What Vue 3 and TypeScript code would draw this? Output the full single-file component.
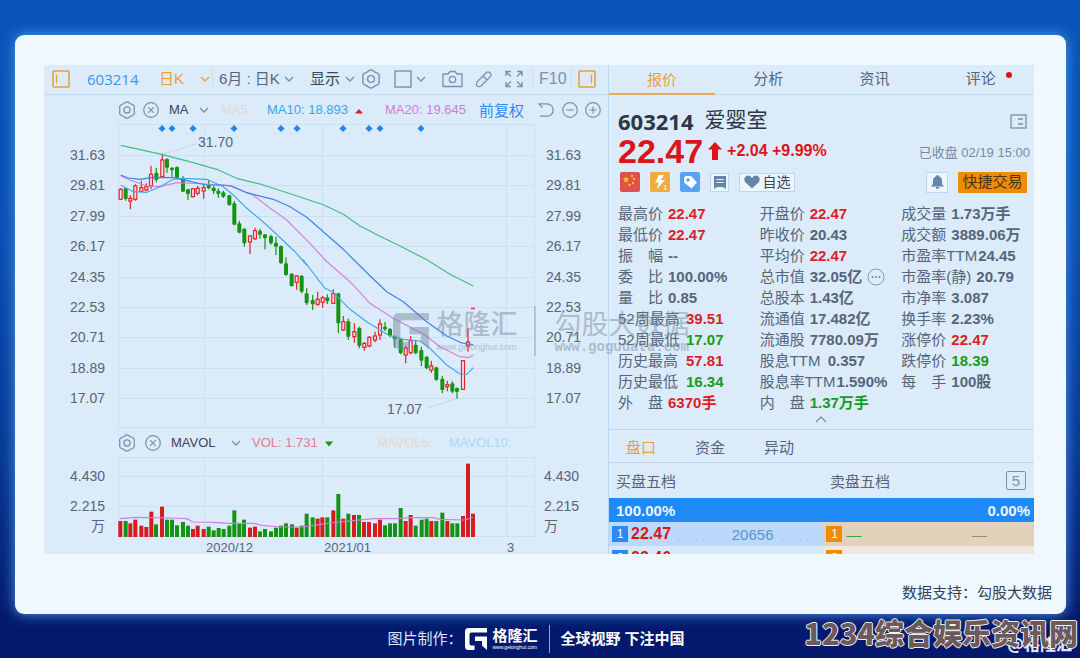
<script setup lang="ts">
type Tone = 'up' | 'down' | ''
type Candle = [x: number, bodyTop: number, bodyBottom: number, high: number, low: number, up: number]
type Point = [number, number]
interface Stat { label: string; value: string; tone?: Tone; fit?: 'wide' | 'tight'; more?: boolean }

/* Series are stored at three units per chart pixel. */
const UNIT = 3
const PLOT_BOTTOM = 81

const early: Candle[] = [
  [32, 208, 238, 205, 240, 1], [47, 205, 237, 203, 242, 0], [61, 235, 243, 225, 268, 1],
  [76, 198, 238, 193, 242, 1], [94, 203, 214, 182, 216, 1], [109, 200, 210, 190, 212, 1],
  [123, 163, 198, 137, 207, 1], [139, 158, 180, 143, 187, 0], [157, 120, 170, 101, 172, 1],
  [171, 117, 143, 115, 158, 0], [186, 143, 151, 141, 170, 0], [201, 141, 173, 139, 175, 0],
  [219, 175, 215, 168, 216, 0], [234, 208, 222, 206, 240, 0], [249, 206, 230, 204, 232, 1],
  [263, 205, 220, 198, 226, 1], [281, 203, 213, 193, 236, 1], [296, 195, 205, 180, 208, 0],
  [311, 203, 214, 198, 222, 0], [325, 212, 222, 205, 233, 0], [340, 217, 230, 212, 234, 0],
  [358, 226, 255, 224, 257, 0], [373, 250, 314, 243, 316, 0], [388, 310, 338, 302, 340, 0],
  [403, 326, 370, 324, 380, 0], [420, 348, 366, 346, 402, 1], [435, 332, 356, 323, 360, 1],
  [450, 332, 344, 326, 356, 0], [465, 343, 355, 342, 388, 0], [483, 348, 370, 344, 374, 0],
  [498, 368, 380, 350, 405, 0], [513, 378, 430, 376, 432, 0], [528, 430, 465, 412, 467, 0],
  [545, 461, 498, 459, 500, 0], [560, 468, 487, 466, 509, 1],
]
const late: Candle[] = [
  [5, 47, 95, 45, 100, 0], [20, 100, 130, 85, 135, 0], [38, 120, 133, 105, 150, 0],
  [53, 118, 133, 95, 137, 1], [68, 113, 127, 108, 143, 1], [82, 112, 124, 103, 132, 0],
  [100, 101, 130, 88, 132, 1], [115, 100, 190, 98, 220, 0], [130, 185, 210, 168, 213, 1],
  [145, 184, 230, 176, 240, 0], [163, 215, 230, 190, 248, 1], [178, 203, 258, 200, 265, 0],
  [193, 250, 262, 247, 272, 1], [208, 232, 258, 228, 262, 1], [225, 228, 240, 215, 247, 1],
  [240, 192, 225, 178, 240, 1], [255, 200, 208, 186, 213, 0], [270, 206, 228, 204, 232, 0],
  [284, 228, 238, 226, 264, 0], [302, 238, 280, 236, 283, 0], [317, 264, 285, 258, 310, 1],
  [332, 242, 278, 228, 283, 1], [347, 254, 280, 240, 283, 0], [364, 270, 302, 260, 318, 0],
  [380, 290, 325, 288, 328, 0], [394, 318, 330, 302, 338, 1], [409, 322, 360, 320, 362, 0],
  [427, 356, 390, 347, 400, 0], [442, 374, 380, 362, 394, 1], [457, 370, 395, 364, 400, 0],
  [471, 384, 396, 382, 416, 0], [489, 302, 388, 300, 390, 1], [504, 246, 258, 205, 275, 1],
]
const earlyX = (x: number): number => (x + 198) / UNIT
const earlyY = (y: number): number => (y - 12) / UNIT
const lateX = (x: number): number => (x + 768) / UNIT
const lateY = (y: number): number => (y + 408) / UNIT
const candles = [
  ...early.map(([x, t, b, h, l, up]) => ({ x: earlyX(x), t: earlyY(t), b: earlyY(b), h: earlyY(h), l: earlyY(l), up: up === 1 })),
  ...late.map(([x, t, b, h, l, up]) => ({ x: lateX(x), t: lateY(t), b: lateY(b), h: lateY(h), l: lateY(l), up: up === 1 })),
]
const joinPoints = (a: Point[], b: Point[]): string => [
  ...a.map(([x, y]) => `${earlyX(x).toFixed(1)},${earlyY(y).toFixed(1)}`),
  ...b.map(([x, y]) => `${lateX(x).toFixed(1)},${lateY(y).toFixed(1)}`),
].join(' ')

const averages = [
  { color: '#3fbf83', points: joinPoints(
    [[32, 76], [155, 103], [250, 128], [320, 148], [380, 175], [450, 192], [550, 224], [640, 254], [700, 283], [750, 318], [810, 349], [870, 378]],
    [[382, 0], [450, 43], [520, 78]]) },
  { color: '#d184dd', points: joinPoints(
    [[32, 168], [60, 180], [110, 198], [150, 200], [200, 188], [290, 192], [360, 198], [430, 226], [480, 264], [530, 300], [600, 370], [650, 425]],
    [[75, 0], [150, 65], [210, 130], [280, 175], [375, 225], [420, 260], [480, 290], [505, 293], [520, 285]]) },
  { color: '#3fa9ea', points: joinPoints(
    [[32, 196], [70, 215], [110, 217], [150, 200], [190, 178], [220, 175], [290, 178], [340, 200], [370, 225], [405, 260], [470, 315], [520, 362], [555, 395], [590, 435]],
    [[10, 0], [75, 85], [100, 97], [150, 148], [200, 185], [265, 225], [310, 238], [360, 243], [390, 265], [440, 315], [480, 342], [500, 343], [520, 323]]) },
  { color: '#3c82ee', points: joinPoints(
    [[32, 165], [55, 174], [90, 178], [130, 172], [195, 173], [240, 184], [290, 195], [340, 195], [365, 198], [410, 218], [490, 238], [540, 260], [590, 292], [640, 335], [700, 388]],
    [[162, 0], [210, 47], [260, 95], [310, 125], [380, 185], [440, 228], [480, 247], [500, 252], [520, 254]]) },
]

const verticals: number[] = [74, 160, 278, 462, 490]
const priceTicks = ['31.63', '29.81', '27.99', '26.17', '24.35', '22.53', '20.71', '18.89', '17.07']
  .map((text, i) => ({ text, y: Math.round(31 + i * 30.4) }))
const events: number[] = [118, 128, 149, 190, 237, 253, 299, 325, 336, 377]

/* Volume: position and height of every bar; falling days are negative. */
const volumeData: Point[] = [
  [241, 48], [257, -48], [271, 41], [286, 52], [304, 34], [319, 30], [334, 76], [348, -38], [366, 91],
  [381, -52], [396, -52], [411, -35], [429, -45], [444, -34], [459, 24], [473, 34], [491, 24], [506, -31],
  [521, -20], [536, -27], [551, -24], [568, -34], [583, -80], [598, -40], [612, -52], [630, 28], [645, 31],
  [660, -17], [675, -24], [693, -17], [708, -28], [723, -34], [738, -41], [756, -38], [770, 28], [785, -34],
  [800, -70], [818, -59], [833, 55], [847, 59], [862, -59], [880, 80], [895, -129], [910, 55], [925, -70],
  [942, 66], [957, -66], [972, 45], [987, 45], [1005, 41], [1020, 52], [1035, -35], [1050, -41], [1065, -41],
  [1082, -87], [1097, 48], [1112, 66], [1127, -34], [1145, -52], [1160, -55], [1174, 48], [1189, -48],
  [1207, -73], [1222, 48], [1237, -41], [1252, -41], [1269, 63], [1284, 220], [1299, 70],
]
const volumes = volumeData.map(([x, h]) => ({ x: (x - 12) / UNIT, h: Math.abs(h) / UNIT, up: h > 0 }))
const volumeAverage = ([
  [240, 281], [290, 277], [390, 279], [440, 281], [460, 291], [520, 292], [570, 295], [640, 295], [665, 301],
  [720, 306], [790, 306], [840, 298], [895, 291], [940, 287], [1000, 281], [1070, 281], [1110, 278],
  [1180, 278], [1200, 283], [1275, 285], [1299, 277],
] as Point[]).map(([x, y]) => `${((x - 12) / UNIT).toFixed(1)},${((y - 93) / UNIT).toFixed(1)}`).join(' ')

const gear = Array.from({ length: 60 }, (_, i) => {
  const a = (i / 60) * Math.PI * 2
  const r = 8.5 - 0.5 * Math.cos(6 * a)
  return `${(10 + r * Math.cos(a)).toFixed(2)},${(10 + r * Math.sin(a)).toFixed(2)}`
}).join(' ')

const tabs = [
  { name: '报价', active: true, dot: false }, { name: '分析', active: false, dot: false },
  { name: '资讯', active: false, dot: false }, { name: '评论', active: false, dot: true },
]
const statColumns: Stat[][] = [
  [
    { label: '最高价', value: '22.47', tone: 'up' }, { label: '最低价', value: '22.47', tone: 'up' },
    { label: '振　幅', value: '--' }, { label: '委　比', value: '100.00%' }, { label: '量　比', value: '0.85' },
    { label: '52周最高', value: '39.51', tone: 'up', fit: 'wide' }, { label: '52周最低', value: '17.07', tone: 'down', fit: 'wide' },
    { label: '历史最高', value: '57.81', tone: 'up', fit: 'wide' }, { label: '历史最低', value: '16.34', tone: 'down', fit: 'wide' },
    { label: '外　盘', value: '6370手', tone: 'up' },
  ],
  [
    { label: '开盘价', value: '22.47', tone: 'up' }, { label: '昨收价', value: '20.43' },
    { label: '平均价', value: '22.47', tone: 'up' }, { label: '总市值', value: '32.05亿', more: true },
    { label: '总股本', value: '1.43亿' }, { label: '流通值', value: '17.482亿' }, { label: '流通股', value: '7780.09万' },
    { label: '股息TTM', value: '0.357', fit: 'wide' }, { label: '股息率TTM', value: '1.590%', fit: 'tight' },
    { label: '内　盘', value: '1.37万手', tone: 'down' },
  ],
  [
    { label: '成交量', value: '1.73万手' }, { label: '成交额', value: '3889.06万' },
    { label: '市盈率TTM', value: '24.45', fit: 'tight' }, { label: '市盈率(静)', value: '20.79' },
    { label: '市净率', value: '3.087' }, { label: '换手率', value: '2.23%' },
    { label: '涨停价', value: '22.47', tone: 'up' }, { label: '跌停价', value: '18.39', tone: 'down' },
    { label: '每　手', value: '100股' },
  ],
]
</script>

<template>
  <div class="page">
    <svg class="defs" aria-hidden="true">
      <symbol id="i-gear" viewBox="0 0 20 20">
        <polygon :points="gear" fill="none" stroke="currentColor" stroke-width="1.4" stroke-linejoin="round" />
        <circle cx="10" cy="10" r="3.4" fill="none" stroke="currentColor" stroke-width="1.4" />
      </symbol>
      <symbol id="i-chev" viewBox="0 0 10 10">
        <path d="M1 3l4 4 4-4" fill="none" stroke="currentColor" stroke-width="1.4" />
      </symbol>
      <symbol id="i-close" viewBox="0 0 16 16">
        <g fill="none" stroke="currentColor" stroke-width="1.2"><circle cx="8" cy="8" r="7.3" /><path d="M5.2 5.2l5.6 5.6M10.8 5.2l-5.6 5.6" /></g>
      </symbol>
      <symbol id="i-logo" viewBox="0 0 44 44">
        <path d="M7 0h37v9H13q-4 0-4 4v18q0 4 4 4h6v9H7q-7 0-7-7V7q0-7 7-7zM20 17h24v27l-10-9V26H20z" fill="currentColor" />
      </symbol>
    </svg>

    <main class="card">
      <div class="board">
        <section class="left">
          <div class="toolbar">
            <button class="gold" aria-label="左侧栏">
              <svg width="18" height="18" viewBox="0 0 18 18" fill="none" stroke="currentColor"><rect x="1" y="1" width="16" height="16" rx="1" stroke-width="1.6" /><path d="M4.5 4.5v9" stroke-width="1.2" /></svg>
            </button>
            <a class="code" href="#">603214</a>
            <label class="drop gold spaced"><select aria-label="周期"><option>日K</option></select><svg width="10" height="10"><use href="#i-chev" /></svg></label>
            <label class="drop rule"><select aria-label="范围"><option>6月 : 日K</option></select><svg width="10" height="10"><use href="#i-chev" /></svg></label>
            <label class="drop dark"><select aria-label="显示"><option>显示</option></select><svg width="10" height="10"><use href="#i-chev" /></svg></label>
            <button aria-label="设置"><svg width="20" height="20"><use href="#i-gear" /></svg></button>
            <button aria-label="形状">
              <svg width="18" height="18" fill="none" stroke="currentColor" stroke-width="1.4"><rect x="1" y="1" width="16" height="16" /></svg>
              <svg class="next" width="10" height="10"><use href="#i-chev" /></svg>
            </button>
            <button aria-label="截图">
              <svg width="21" height="18" fill="none" stroke="currentColor" stroke-width="1.3"><path d="M1 4h5l2-2.5h5L15 4h5v12.500H1z" stroke-linejoin="round" /><circle cx="10.500" cy="9.500" r="3.200" /></svg>
            </button>
            <button aria-label="画线">
              <svg width="18" height="18" fill="none" stroke="currentColor" stroke-width="1.3" stroke-linejoin="round"><path d="M2 12L11.500 2.500q1.500-1.300 3 0l1 1q1.300 1.500 0 3L6 16q-1.500 1-3 .5Q1.500 16 1.500 14.500 1.400 13 2 12zM8 6l4 4" /></svg>
            </button>
            <button aria-label="全屏">
              <svg width="20" height="18" fill="none" stroke="currentColor" stroke-width="1.4"><path d="M2 6V1.500h5M2 1.500l5 5M13 1.500h5V6M18 1.500l-5 5M2 12v4.500h5M2 16.500l5-5M18 12v4.500h-5M18 16.500l-5-5" /></svg>
            </button>
            <button class="rule f10">F10</button>
            <button class="rule gold" aria-label="右侧栏">
              <svg width="18" height="18" viewBox="0 0 18 18" fill="none" stroke="currentColor"><rect x="1" y="1" width="16" height="16" rx="1" stroke-width="1.6" /><path d="M13.500 4.500v9" stroke-width="1.2" /></svg>
            </button>
          </div>

          <div class="params price">
            <button aria-label="指标设置"><svg width="18" height="18"><use href="#i-gear" /></svg></button>
            <button aria-label="关闭指标"><svg width="16" height="16"><use href="#i-close" /></svg></button>
            <label class="drop wide dark"><select aria-label="主图指标"><option>MA</option></select><svg width="10" height="10"><use href="#i-chev" /></svg></label>
            <span class="faint">MA5:</span>
            <span class="cyan">MA10: 18.893</span>
            <span><svg width="8" height="6"><path d="M0 5.500L4 1l4 4.500z" fill="#d91e1e" /></svg></span>
            <span class="pink">MA20: 19.645</span>
            <button class="adjust">前复权</button>
            <button aria-label="撤销"><svg width="16" height="16" fill="none" stroke="currentColor" stroke-width="1.3"><path d="M4.500 5.500L1 1.800H9a6 6 0 0 1 0 12.400H2" /></svg></button>
            <button aria-label="缩小"><svg width="16" height="16" fill="none" stroke="currentColor" stroke-width="1.2"><circle cx="8" cy="8" r="7.300" /><path d="M4.500 8h7" /></svg></button>
            <button aria-label="放大"><svg width="16" height="16" fill="none" stroke="currentColor" stroke-width="1.2"><circle cx="8" cy="8" r="7.300" /><path d="M4.500 8h7M8 4.500v7" /></svg></button>
          </div>

          <svg class="chart" viewBox="0 0 564 305" role="img" aria-label="K线图">
            <g stroke="#c9e0f5">
              <path v-for="x in verticals" :key="x" :d="`M${x + 0.5} 0V304`" />
              <path d="M74 .5H490M74 303.500H490" />
              <path v-for="t in priceTicks" :key="t.y" :d="`M74 ${t.y + 0.5}H490`" />
            </g>
            <g class="axis">
              <text v-for="t in priceTicks" :key="t.y" x="61" :y="t.y + 5" text-anchor="end">{{ t.text }}</text>
              <text v-for="t in priceTicks" :key="-t.y" x="502" :y="t.y + 5">{{ t.text }}</text>
              <text x="154" y="23">31.70</text>
              <text x="343" y="290">17.07</text>
            </g>
            <path d="M119 30L152 20M383 284L412 275" stroke="#c3d6ea" />
            <path v-for="x in events" :key="x" :d="`M${x - 3.5} 4.500l3.500-3.500 3.500 3.500-3.500 3.500z`" fill="#1f86f0" />
            <g v-for="(c, i) in candles" :key="i">
              <template v-if="c.up">
                <path :d="`M${c.x} ${c.h}V${c.t}M${c.x} ${c.b}V${c.l}`" stroke="#e02428" stroke-width="1.200" />
                <rect :x="c.x - 1.5" :y="c.t" width="3" :height="c.b - c.t" fill="#f4e4ea" stroke="#e02428" stroke-width="1.200" />
              </template>
              <template v-else>
                <path :d="`M${c.x} ${c.h}V${c.l}`" stroke="#159315" stroke-width="1.200" />
                <rect :x="c.x - 2" :y="c.t" width="4" :height="c.b - c.t" rx="1" fill="#159315" />
              </template>
            </g>
            <path d="M427 184.500h4" stroke="#e02428" stroke-width="1.400" />
            <polyline v-for="a in averages" :key="a.color" :points="a.points" fill="none" :stroke="a.color" stroke-width="1.200" stroke-linejoin="round" />
          </svg>

          <div class="params volume">
            <button aria-label="指标设置"><svg width="18" height="18"><use href="#i-gear" /></svg></button>
            <button aria-label="关闭指标"><svg width="16" height="16"><use href="#i-close" /></svg></button>
            <label class="drop wide dark"><select aria-label="副图指标"><option>MAVOL</option></select><svg width="10" height="10"><use href="#i-chev" /></svg></label>
            <span class="rose">VOL: 1.731</span>
            <span><svg width="8" height="6"><path d="M0 .5h8L4 5.500z" fill="#159315" /></svg></span>
            <span class="faint">MAVOL5:</span>
            <span class="pale">MAVOL10:</span>
          </div>

          <svg class="chart" viewBox="0 0 564 98" role="img" aria-label="成交量">
            <g stroke="#c9e0f5">
              <path v-for="x in verticals" :key="x" :d="`M${x + 0.5} 1V81`" />
              <path d="M74 1.500H490M74 20.500H490M74 50.500H490M74 80.500H490" />
            </g>
            <rect v-for="v in volumes" :key="v.x" :x="v.x - 2" :y="PLOT_BOTTOM - v.h" width="4" :height="v.h" :fill="v.up ? '#d51c1f' : '#159315'" />
            <polyline :points="volumeAverage" fill="none" stroke="#cf7fdb" stroke-width="1.200" />
            <g class="axis">
              <g text-anchor="end"><text x="61" y="25">4.430</text><text x="61" y="55">2.215</text><text x="61" y="75">万</text></g>
              <text x="500" y="25">4.430</text><text x="500" y="55">2.215</text><text x="500" y="75">万</text>
              <text class="date" x="162" y="96">2020/12</text><text class="date" x="280" y="96">2021/01</text><text class="date" x="463" y="96">3</text>
            </g>
          </svg>
        </section>

        <section class="right">
          <nav class="tabs">
            <button v-for="t in tabs" :key="t.name" :class="{ active: t.active }">{{ t.name }}<i v-if="t.dot" class="dot"></i></button>
          </nav>

          <div class="quote">
            <div class="name">
              <b>603214</b><span>爱婴室</span>
              <button aria-label="详情"><svg width="17" height="15" fill="none" stroke="currentColor" stroke-width="1.300"><rect x="1" y="1" width="15" height="13" /><path d="M8 5h5M8 10h5" /></svg></button>
            </div>
            <div class="last">
              <strong>22.47</strong>
              <svg width="14" height="18"><path d="M7 0l7 7.500h-4V18H4V7.500H0z" fill="#dc1418" /></svg>
              <b>+2.04 +9.99%</b>
              <time>已收盘 02/19 15:00</time>
            </div>
            <div class="actions">
              <svg width="20" height="20"><rect width="20" height="20" rx="2" fill="#e0504f" /><path d="M6 4l1 2.300 2.400.2-1.900 1.600.6 2.400L6 9.200l-2.100 1.300.6-2.400-1.900-1.600L5 6.300z" fill="#fbc51d" /><g fill="#fbc51d"><circle cx="12" cy="4" r="1.200" /><circle cx="14" cy="7" r="1.200" /><circle cx="13" cy="11" r="1.200" /><circle cx="9.500" cy="13" r="1.200" /></g></svg>
              <svg width="20" height="20"><rect width="20" height="20" rx="2" fill="#edab42" /><path d="M9 3h5l-3 5h4L7 17l1.500-6.500H5z" fill="#fff" /><text x="13" y="18" font-size="8" fill="#fff">1</text></svg>
              <svg width="20" height="20"><rect width="20" height="20" rx="2" fill="#57a1f6" /><path d="M4 5.500L5.500 4H11l6 6.500-5.500 6L4 10.500z" fill="#fff" /><circle cx="8" cy="8" r="1.700" fill="#57a1f6" /></svg>
              <button class="box" aria-label="笔记"><svg width="12" height="13"><path d="M0 0h12v13l-3-2H3l-3 2z" fill="#6685aa" /><path d="M2.500 3.500h7M2.500 6.500h7" stroke="#eef6ff" stroke-width="1.200" /></svg></button>
              <button class="box fav"><svg width="16" height="14"><path d="M8 13.500L1.500 7.500Q-.5 5 .8 2.500 2 .5 4.300.5 6.800.5 8 3 9.200.5 11.700.5 14 .5 15.200 2.500 16.500 5 14.500 7.500z" fill="#6685aa" /></svg>自选</button>
              <button class="box bell" aria-label="提醒"><svg width="13" height="14"><path d="M6.500 0q1 0 1.200 1.200Q11 2.200 11 6v3l2 2.500H0L2 9V6q0-3.800 3.300-4.800Q5.500 0 6.500 0zM4.500 12h4q-.5 2-2 2t-2-2z" fill="#6685aa" /></svg></button>
              <button class="trade">快捷交易</button>
            </div>

            <div class="stats">
              <dl v-for="(col, i) in statColumns" :key="i">
                <div v-for="s in col" :key="s.label" :class="s.fit">
                  <dt>{{ s.label }}</dt>
                  <dd :class="s.tone">{{ s.value }}</dd>
                  <svg v-if="s.more" width="18" height="18"><circle cx="9" cy="9" r="8" fill="none" stroke="#7f98b8" /><g fill="#7088a8"><circle cx="5.500" cy="9" r="1" /><circle cx="9" cy="9" r="1" /><circle cx="12.500" cy="9" r="1" /></g></svg>
                </div>
              </dl>
            </div>
            <button class="fold" aria-label="收起"><svg width="12" height="8" fill="none" stroke="currentColor" stroke-width="1.400"><path d="M1 7l5-5 5 5" /></svg></button>
          </div>

          <nav class="subtabs"><button class="active">盘口</button><button>资金</button><button>异动</button></nav>
          <div class="levels"><span>买盘五档</span><span>卖盘五档</span><button>5</button></div>
          <div class="ratio"><span>100.00%</span><span>0.00%</span></div>
          <div class="depth">
            <div class="bid"><i>1</i><b>22.47</b><span class="dots"></span><em>20656</em><span class="dots tail"></span></div>
            <div class="ask"><i>1</i><b>—</b><em>—</em></div>
          </div>
          <div class="depth cut">
            <div class="bid"><i>2</i><b>22.46</b><em>42</em><span class="tail"></span></div>
            <div class="ask"><i>2</i></div>
          </div>
        </section>

        <div class="mark" aria-hidden="true">
          <svg width="36" height="38"><use href="#i-logo" /></svg>
          <div><p class="brand">格隆汇</p><p class="url">www.gelonghui.com</p></div>
          <div class="gogu"><p>勾股大数据</p><p class="url">www.gogudata.com</p></div>
        </div>
      </div>
      <p class="note">数据支持：勾股大数据</p>
    </main>

    <footer>
      <span class="by">图片制作：</span>
      <svg width="22" height="22"><use href="#i-logo" /></svg>
      <div class="maker"><b>格隆汇</b><small>www.gelonghui.com</small></div>
      <strong>全球视野 下注中国</strong>
    </footer>
    <div class="stamp"><small>@格隆汇</small><span>1234综合娱乐资讯网</span></div>
  </div>
</template>

<style>
body { margin: 0; }
</style>

<style scoped>
* { box-sizing: border-box; }
.page {
  position: relative; display: flex; flex-direction: column; min-height: 100vh; padding-top: 35px; overflow: hidden;
  background: linear-gradient(#0b54b9, #0a4fb4 35%, #073794 70%, #04196d 94%, #04196d);
  font-family: "Liberation Sans", "Noto Sans CJK SC", sans-serif; color: #55657a;
}
.defs { position: absolute; width: 0; height: 0; }
button, select { padding: 0; border: 0; background: none; font: inherit; color: inherit; }
button { display: flex; align-items: center; }
p, dl, dd { margin: 0; }
i, em { font-style: normal; }
svg { flex: none; }
.card { margin: 0 14px 0 15px; padding: 30px 0 10px; border-radius: 9px; background: #eff7ff; box-shadow: 0 0 14px #4d9be4; }
.board { position: relative; display: grid; grid-template-columns: minmax(0, 564fr) minmax(0, 426fr); margin: 0 32px 0 29px; background: #dcebfa; }
.gold { color: #e9a03a; }
.dark { color: #3a4656; }

.toolbar {
  display: grid; height: 30px; padding: 0 0 2px 8px; border-bottom: 1px solid #bcdcf3; font-size: 15px; color: #7a90ad;
  grid-template-columns: 35fr 72fr 53fr 98fr 51fr 33fr 48fr 33fr 29fr 28fr 39fr 37fr;
}
.toolbar > * { min-width: 0; display: flex; align-items: center; white-space: nowrap; }
.toolbar .gold { color: #e9a03a; }
.code { font-family: "Open Sans", sans-serif; color: #3f92f2; text-decoration: none; }
.drop { display: flex; align-items: center; gap: 4px; }
.drop select { appearance: none; }
.drop svg { color: #7a90ad; }
.spaced { gap: 15px; }
.spaced svg { color: #e9a03a; }
.wide { justify-content: space-between; padding-right: 20px; }
.volume .wide { padding-right: 11px; }
.price .wide { padding-right: 12px; }
.rule { position: relative; padding-left: 7px; }
.rule::before { content: ""; position: absolute; left: 0; top: 4px; bottom: 4px; width: 1px; background: #cbdff3; }
.rule select { color: #55657a; }
.toolbar .dark { color: #3a4656; }
.next { margin-left: 4px; }
.f10 { font-size: 16px; }

.params { display: grid; align-items: center; padding-left: 74px; font-size: 13px; color: #7a90ad; white-space: nowrap; }
.params > * { min-width: 0; }
.params .dark { color: #3a4656; }
.price { height: 29px; grid-template-columns: 25fr 26fr 52fr 46fr 88fr 30fr 94fr 59fr 24fr 23fr 23fr; }
.volume { height: 27px; grid-template-columns: 27fr 26fr 81fr 73fr 52fr 72fr 159fr; }
.faint { color: #e3d9cc; }
.cyan { color: #36a9e6; }
.pink { color: #d27bdc; }
.rose { color: #e0808c; }
.pale { color: #a9d9f3; }
.params .adjust { font-size: 15px; color: #2a8af2; }
.chart { display: block; width: 100%; height: auto; }
.axis { font-size: 14px; fill: #55657a; }
.date { font-size: 13px; }

.right { border-left: 1px solid #b5d9f4; }
.tabs { display: grid; grid-template-columns: repeat(4, 1fr); height: 30px; border-bottom: 1px solid #bcdcf3; font-size: 15px; }
.tabs button { position: relative; justify-content: center; padding-bottom: 4px; }
.tabs .active { color: #e9a03a; box-shadow: inset 0 -2px #e9ab4b; margin-bottom: -1px; }
.dot { position: absolute; left: 78px; top: 7px; width: 6px; height: 6px; border-radius: 50%; background: #dc1418; }
.quote { padding: 11px 0 0 9px; }
.name { display: flex; align-items: center; height: 30px; padding-right: 7px; font-size: 21px; color: #2b3648; }
.name b { font: 700 22px "Open Sans", sans-serif; }
.name span { margin-left: 11px; line-height: 26px; padding-bottom: 2px; }
.name button { margin-left: auto; color: #7a90ad; }
.last { display: flex; align-items: center; height: 30px; padding-right: 4px; white-space: nowrap; color: #dc1418; }
.last strong { font-size: 34px; line-height: 30px; }
.last svg { margin: 0 5px; }
.last b { font-size: 16px; }
.last time { margin-left: auto; font-size: 13px; color: #7888a0; }
.actions { display: flex; align-items: center; gap: 10px; height: 20px; margin-top: 6px; padding: 0 7px 0 2px; font-size: 14px; line-height: 20px; }
.box { justify-content: center; width: 19px; height: 19px; border: 1px solid #bad8f4; background: #ecf5fe; }
.fav { gap: 3px; width: 56px; color: #3a4656; }
.bell { width: 22px; height: 21px; margin-left: auto; }
.trade { justify-content: center; width: 69px; height: 21px; border-radius: 1px; background: #ec8c07; color: #4c3510; font-size: 15px; }
.stats { display: grid; grid-template-columns: repeat(3, minmax(0, 1fr)); margin: 11px -9px 0 0; font-size: 15px; }
.stats dl > div { display: flex; align-items: center; gap: 5px; height: 21px; white-space: nowrap; line-height: 21px; }
.stats dd { font-weight: 700; }
.wide dt { min-width: 63px; }
.stats .wide { padding: 0; justify-content: flex-start; }
.stats .tight { gap: 1px; }
.up { color: #dc1f24; }
.down { color: #159c1c; }
.fold { justify-content: center; width: 100%; height: 16px; padding: 0 10px 4px 0; color: #7a90ad; }

.subtabs { display: flex; gap: 39px; height: 34px; padding-left: 17px; border: solid #b5d9f4; border-width: 1px 0; font-size: 15px; }
.subtabs .active { color: #e9a03a; }
.levels { display: grid; grid-template-columns: 214fr 176fr 28fr; align-items: center; height: 35px; padding-left: 7px; font-size: 15px; }
.levels button { justify-content: center; width: 20px; height: 19px; border: 1px solid #7a90ad; border-radius: 2px; color: #7a90ad; }
.ratio { display: flex; justify-content: space-between; align-items: center; height: 24px; padding: 0 4px 0 7px; background: #1f89f8; color: #eef6ff; font-size: 15px; font-weight: 700; }
.depth { display: grid; grid-template-columns: 215fr 211fr; height: 24px; font-size: 15px; }
.depth > div { display: flex; align-items: center; height: 24px; padding-left: 3px; overflow: hidden; }
.depth i { width: 16px; height: 16px; margin-right: 3px; background: #2f87f4; color: #fff; font-size: 12px; line-height: 16px; text-align: center; }
.bid { background: #bbdafb; }
.bid b { font-size: 16px; color: #dc1418; }
.bid em { margin-left: auto; color: #5a93cb; }
.dots { flex: 1; height: 1px; margin: 10px 8px 0; background: repeating-linear-gradient(90deg, #8fb8e2 0 1px, transparent 1px 6px); }
.depth .tail { flex: none; width: 50px; }
.depth .dots.tail { width: 30px; margin: 10px 10px 0; }
.ask { background: #e1d2bc; }
.ask i { background: #ee8c0a; }
.ask b { margin-left: 1px; color: #3ba33b; font-weight: 400; }
.ask em { margin: 0 47px 0 auto; color: #a28378; }
.cut { height: 8px; overflow: hidden; }
.cut .bid { background: #d5e9fd; }
.cut .ask { background: #ede9df; }

.mark { position: absolute; left: 35%; top: 241px; display: flex; align-items: center; color: #71849b; opacity: .45; pointer-events: none; white-space: nowrap; }
.mark > svg { margin: 0 8px 0 2px; }
.mark p { font-size: 27px; line-height: 32px; }
.mark .brand { font-weight: 500; }
.mark .url { font-size: 9px; line-height: 12px; }
.gogu { margin-left: 16px; padding: 3px 0 3px 19px; border-left: 2px solid #8b9bb0; }
.mark .gogu .url { font: 700 14px/12px "Liberation Mono", monospace; }
.note { margin: 28px 14px 0 0; font-size: 15px; line-height: 22px; text-align: right; color: #33445a; }

footer { flex: 1; display: flex; align-items: center; justify-content: center; min-height: 44px; padding: 5px 8px 0 0; color: #fff; font-size: 15px; line-height: 20px; white-space: nowrap; }
.by { color: #dce6fa; }
footer svg { margin: 0 5px 0 3px; }
.maker { display: flex; flex-direction: column; }
.maker b { line-height: 17px; }
.maker small { font-size: 5px; line-height: 6px; }
footer strong { margin-left: 12px; padding: 4px 0 4px 10px; border-left: 1px solid #8fa3d4; }
.stamp { position: absolute; right: 2px; bottom: 6px; font: 900 29px/40px "Noto Sans CJK SC", sans-serif; color: #6b5a5b; white-space: nowrap; }
.stamp span { position: relative; text-shadow: 1px 0 #f5efef, -1px 0 #f5efef, 0 1px #f5efef, 0 -1px #f5efef; }
.stamp small { position: absolute; right: 6px; bottom: 0; font-size: 16px; line-height: 18px; color: #dfe5f2; }
</style>
